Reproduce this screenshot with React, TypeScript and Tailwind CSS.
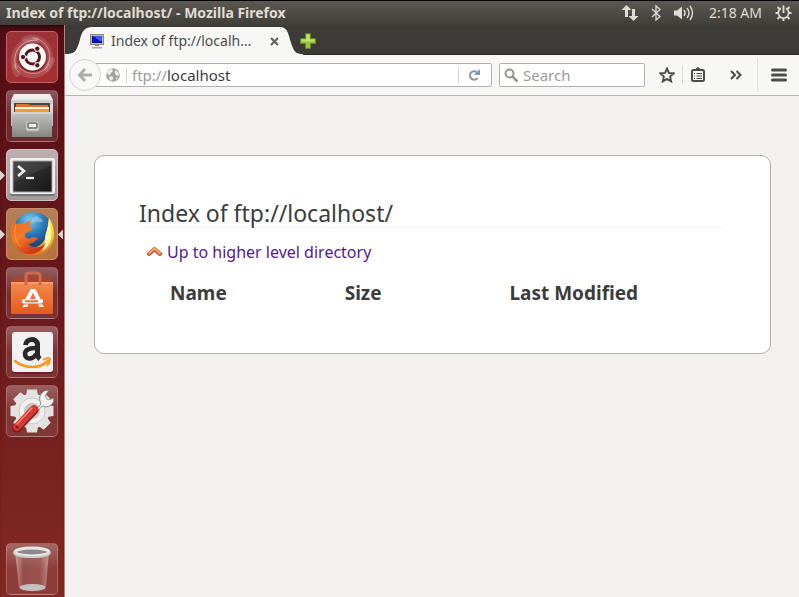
import type { ReactNode } from 'react';

const tileBase =
  'relative flex size-[52px] shrink-0 items-center justify-center rounded-[5px] border';

function Tile({ label, tone, children }: { label: string; tone: string; children: ReactNode }) {
  return (
    <button type="button" aria-label={label} className={`${tileBase} ${tone}`}>
      {children}
    </button>
  );
}

const glass = 'border-white/20 bg-linear-to-b from-white/30 via-white/10 to-white/10';

function RunningMark() {
  return (
    <svg className="absolute top-[20px] -left-[7px]" width="5" height="11" viewBox="0 0 5 11" aria-hidden="true">
      <path d="M0 0.5 5 5.5 0 10.5Z" fill="#ddd5d2" />
    </svg>
  );
}

function FocusMark() {
  return (
    <svg className="absolute top-[20px] -right-[6px]" width="5" height="11" viewBox="0 0 5 11" aria-hidden="true">
      <path d="M5 0.5 0 5.5 5 10.5Z" fill="#ddd5d2" />
    </svg>
  );
}

function DashIcon() {
  return (
    <svg width="50" height="50" viewBox="0 0 50 50" aria-hidden="true">
      <g fill="none" stroke="#fff" strokeLinecap="round">
        <path d="M10 42C2 27 9 8 29 8" strokeWidth="6" opacity=".14" />
        <path d="M9 36C4 20 14 8 30 8" opacity=".5" />
        <path d="M18 7C36 1 50 20 40 37" strokeWidth="6" opacity=".12" />
        <path d="M26 6C42 8 47 25 39 36" opacity=".4" />
        <path d="M45 28C38 46 18 48 9 34" strokeWidth="6" opacity=".14" />
        <path d="M43 32C33 46 18 43 11 34" opacity=".35" />
      </g>
      <circle cx="25.5" cy="26" r="14" fill="#4a0d10" opacity=".5" />
      <circle cx="25.5" cy="25" r="13.5" fill="#fff" />
      <circle cx="25.5" cy="25" r="7" fill="none" stroke="#5c1619" strokeWidth="3" />
      <g stroke="#fff" strokeWidth="1.5">
        <path d="M14 25h6M28.500 19.700l3-5M28.500 30.300l3 5" />
      </g>
      <g fill="#5c1619" stroke="#fff" strokeWidth="1">
        <circle cx="16" cy="25" r="2.700" />
        <circle cx="30.300" cy="16.700" r="2.700" />
        <circle cx="30.300" cy="33.300" r="2.700" />
      </g>
    </svg>
  );
}

function FilesIcon() {
  return (
    <svg width="50" height="50" viewBox="0 0 50 50" aria-hidden="true">
      <defs>
        <linearGradient id="drawer" x2="0" y2="1"><stop stopColor="#c3c3c2" /><stop offset="1" stopColor="#858584" /></linearGradient>
        <linearGradient id="cabinet" x2="0" y2="1"><stop stopColor="#f4f4f3" /><stop offset="1" stopColor="#b6b6b5" /></linearGradient>
      </defs>
      <path d="M7 3h36l3 6v26H4V9Z" fill="url(#cabinet)" />
      <path d="M4 9h42v4H4Z" fill="#cfcfce" />
      <path d="M7 12h36v13H7Z" fill="#464543" />
      <path d="M9 13h12l2 1h18v7H9Z" fill="#dd7127" />
      <path d="M8 16h34v2H8Z" fill="#fff1de" />
      <path d="M8 18h34v4H8Z" fill="#ee9a3c" />
      <path d="M6 21h38l1 2v23H5V23Z" fill="url(#drawer)" />
      <path d="M6 22h38" stroke="#e8e8e7" />
      <rect x="19" y="30" width="13" height="10" rx="2" fill="#d8d8d7" stroke="#aaa" />
      <rect x="21" y="32" width="9" height="5" rx="1" fill="#efefee" stroke="#6c6c6b" strokeWidth="1.500" />
    </svg>
  );
}

function TerminalIcon() {
  return (
    <svg width="50" height="50" viewBox="0 0 50 50" aria-hidden="true">
      <defs>
        <linearGradient id="screen" x2="1" y2="1"><stop stopColor="#3c3c3c" /><stop offset=".5" stopColor="#2b2b2b" /><stop offset="1" stopColor="#151515" /></linearGradient>
      </defs>
      <rect x="3" y="9" width="45" height="37" rx="2" fill="#777" />
      <rect x="3" y="8" width="45" height="36" rx="2" fill="#eeeeed" />
      <rect x="6" y="11" width="39" height="31" fill="url(#screen)" stroke="#aaa" />
      <path d="M7 12h37v3L7 32Z" fill="#fff" opacity=".08" />
      <path d="m11 16 6 5-6 5" fill="none" stroke="#f4f4f4" strokeWidth="2.500" />
      <path d="M19 28h8" stroke="#f4f4f4" strokeWidth="2.200" />
    </svg>
  );
}

function FirefoxIcon() {
  return (
    <svg width="50" height="50" viewBox="0 0 50 50" aria-hidden="true">
      <defs>
        <radialGradient id="globe" cx=".42" cy=".2" r=".8"><stop stopColor="#7cc9ee" /><stop offset=".45" stopColor="#2979b8" /><stop offset="1" stopColor="#122b63" /></radialGradient>
        <linearGradient id="fox" x2=".6" y2="1"><stop stopColor="#e86a24" /><stop offset=".5" stopColor="#f37a27" /><stop offset="1" stopColor="#c9351a" /></linearGradient>
        <linearGradient id="tail" x2="0" y2="1"><stop stopColor="#fff37b" /><stop offset=".5" stopColor="#fbc92d" /><stop offset="1" stopColor="#e96b1c" /></linearGradient>
      </defs>
      <circle cx="26" cy="23" r="20" fill="url(#globe)" />
      <path d="M29 7c4 1 6 3 7 6-4 0-8-1-10 1l-3-2Z" fill="#a7daee" opacity=".5" />
      <path d="M42 9c6 9 7 21 1 29-6 8-18 11-27 6l3-6c9 3 16-2 19-8 3-6 2-12 4-21Z" fill="url(#tail)" />
      <path d="M42 14c5 13 2 23-7 28 4-6 2-12 4-18Z" fill="#fff6a0" />
      <path d="M7 10c0 3 1 4 3 5 3-1 5-1 8 0 2-2 4-4 7-4-2 2-3 4-2 7 2 0 3 1 2 2-2 3-7 3-7 6 0 4 4 4 6 3 3-2 6-1 7 1-3 1-5 5-10 5 5 5 13 4 18-1-4 8-11 12-19 11C11 43 4 34 4 24c0-5 1-9 3-14Z" fill="url(#fox)" />
      <path d="M9 16c-3 8-1 16 5 22" fill="none" stroke="#ffac51" opacity=".65" />
    </svg>
  );
}

function SoftwareIcon() {
  return (
    <svg width="50" height="50" viewBox="0 0 50 50" aria-hidden="true">
      <defs>
        <linearGradient id="bag" x2="0" y2="1"><stop stopColor="#f28a4e" /><stop offset="1" stopColor="#e55a1d" /></linearGradient>
      </defs>
      <path d="M7 9h36l3 6H4Z" fill="#a8452a" />
      <path d="M4 14h42v32H4Z" fill="url(#bag)" />
      <path d="M4 14h42v2H4Z" fill="#ffab7a" opacity=".6" />
      <path d="M19 17V8q0-3 3-3h8q3 0 3 3v9" fill="none" stroke="#cf6b4c" strokeWidth="3" />
      <path d="M18.500 31 23.500 21h5l5 10h-4.500l-3-6.500-3 6.500Z" fill="#fff" />
      <rect x="15" y="31" width="21" height="4.500" rx="2" fill="#fff" />
      <rect x="18" y="32.300" width="13" height="2" fill="#ea6c30" />
      <path d="M15.500 39 17 36.500h4.500L20 39ZM31 36.500h4.500L37 39h-4.500Z" fill="#fff" />
    </svg>
  );
}

function AmazonIcon() {
  return (
    <svg width="50" height="50" viewBox="0 0 50 50" aria-hidden="true">
      <rect x="5" y="6" width="41" height="41" rx="3" fill="#581015" opacity=".5" />
      <rect x="5" y="5" width="41" height="40" rx="3" fill="#f1f1f1" />
      <path d="M18.500 18c1-7 11-7 12-1v11q0 2 2.500 4" fill="none" stroke="#292929" strokeWidth="5" />
      <path d="M29 21c-7 0-11 2-11 6 0 6 8 6 11 0" fill="none" stroke="#292929" strokeWidth="4.500" />
      <path d="M8 34c10 8 25 8 33 0" fill="none" stroke="#f7981c" strokeWidth="2.500" strokeLinecap="round" />
      <path d="M36 33q6-3 7-1 0 3-3 7" fill="none" stroke="#f7981c" strokeWidth="2" />
    </svg>
  );
}

function SettingsIcon() {
  return (
    <svg width="50" height="50" viewBox="0 0 50 50" aria-hidden="true">
      <g transform="translate(25 25)" fill="#e3e3e2">
        <circle r="17.500" />
        <path id="cog" d="M-6-15-5-21.500H5L6-15Z" />
        <use href="#cog" transform="rotate(45)" /><use href="#cog" transform="rotate(90)" />
        <use href="#cog" transform="rotate(135)" /><use href="#cog" transform="rotate(180)" />
        <use href="#cog" transform="rotate(225)" /><use href="#cog" transform="rotate(270)" />
        <use href="#cog" transform="rotate(315)" />
        <circle r="13" fill="#efefee" stroke="#cacac9" />
        <circle r="8" fill="#c9c3c2" />
      </g>
      <path d="m29 24 5-6q-4-8 3-13l5-1-4 6 3 4 6-2q0 8-8 9l-4-1-5 6Z" fill="#f1f1f0" stroke="#777" strokeWidth=".8" />
      <path d="M10 42 27 24" stroke="#791b18" strokeWidth="9" strokeLinecap="round" />
      <path d="M10 41 27 23" stroke="#d63931" strokeWidth="7.500" strokeLinecap="round" />
      <path d="M10 38 25 22" stroke="#ff8474" strokeWidth="1.500" strokeLinecap="round" />
      <circle cx="10" cy="41" r="1.500" fill="#821c17" />
    </svg>
  );
}

function TrashIcon() {
  return (
    <svg width="50" height="50" viewBox="0 0 50 50" aria-hidden="true">
      <defs>
        <linearGradient id="bin"><stop stopColor="#fff" stopOpacity=".45" /><stop offset=".25" stopColor="#fff" stopOpacity=".08" /><stop offset=".75" stopColor="#fff" stopOpacity=".12" /><stop offset="1" stopColor="#fff" stopOpacity=".4" /></linearGradient>
      </defs>
      <path d="M8 8 12 43q13 6 27 0L42 8Z" fill="url(#bin)" />
      <ellipse cx="25.500" cy="43.500" rx="13" ry="3.500" fill="#c4c0bc" />
      <ellipse cx="25" cy="8" rx="17" ry="4" fill="#8f8783" stroke="#e8e8e6" strokeWidth="3" />
      <path d="M7 8q0 5 18 5t18-5" fill="none" stroke="#cbc9c5" strokeWidth="2" />
    </svg>
  );
}

function Launcher() {
  return (
    <nav
      aria-label="Launcher"
      className="flex w-[65px] shrink-0 flex-col gap-[7px] border-r border-[#b9827f] bg-linear-to-b from-[#560d15] via-[#6b1a1d] to-[#842923] pt-[6px] pb-[2px] pl-[6px] shadow-[inset_0_5px_5px_-3px_#240609]"
    >
      <Tile label="Search your computer" tone="border-[#bd6467] bg-linear-to-b from-[#9b3338] to-[#a52f32]"><DashIcon /></Tile>
      <Tile label="Files" tone={glass}><FilesIcon /></Tile>
      <Tile label="Terminal" tone="border-[#cbc0c2] bg-linear-to-b from-[#bcaeb1] to-[#a6999d]"><RunningMark /><TerminalIcon /></Tile>
      <Tile label="Firefox" tone="border-[#c79269] bg-linear-to-b from-[#b47e57] to-[#b9733c]"><RunningMark /><FirefoxIcon /><FocusMark /></Tile>
      <Tile label="Ubuntu Software Center" tone={glass}><SoftwareIcon /></Tile>
      <Tile label="Amazon" tone={glass}><AmazonIcon /></Tile>
      <Tile label="System Settings" tone={glass}><SettingsIcon /></Tile>
      <div className="mt-auto"><Tile label="Trash" tone={glass}><TrashIcon /></Tile></div>
    </nav>
  );
}

function TopPanel() {
  return (
    <header className="flex h-[25px] shrink-0 items-center justify-between border-t border-black bg-linear-to-b from-[#5b5850] to-[#403f3a] pr-[7px] pl-[6px] text-[#dfdbd2]">
      <h1 className="text-[14px] leading-5 font-bold">Index of ftp://localhost/ - Mozilla Firefox</h1>
      <div className="flex items-center">
        <button type="button" aria-label="Network">
          <svg width="18" height="18" viewBox="0 0 18 18" fill="currentColor" aria-hidden="true">
            <path d="M5.500 1 .5 6H4v7h3V6h3.500ZM11 5v7H7.500l5 5 5-5H14V5Z" />
          </svg>
        </button>
        <button type="button" aria-label="Bluetooth" className="ml-[12px]">
          <svg width="10" height="18" viewBox="0 0 10 18" fill="none" stroke="currentColor" strokeWidth="1.300" aria-hidden="true">
            <path d="m1 5 8 7.500L5 16V2l4 3.500L1 13" />
          </svg>
        </button>
        <button type="button" aria-label="Sound" className="ml-[12px]">
          <svg width="22" height="18" viewBox="0 0 22 18" fill="none" stroke="currentColor" aria-hidden="true">
            <path d="M1 6.500h3l5-4v13l-5-4H1Z" fill="currentColor" stroke="none" />
            <path d="M11 6q2 3 0 6M14 4q4 5 0 10M17 2q5 7 0 14" strokeWidth="1.400" />
          </svg>
        </button>
        <time className="ml-[14px] text-[14px] leading-5">2:18 AM</time>
        <button type="button" aria-label="Session" className="ml-[13px]">
          <svg width="17" height="18" viewBox="0 0 17 18" fill="none" stroke="currentColor" aria-hidden="true">
            <path d="M6 4.300a5.200 5.200 0 1 0 5 0" strokeWidth="1.700" />
            <path d="M8.500 1.500v7.500" strokeWidth="1.800" />
            <path d="m2.500 3 2 2M14.500 3l-2 2M.5 9H3M14 9h2.500M2.500 15l2-2M14.500 15l-2-2M8.500 14.500V17" strokeWidth="1.800" />
          </svg>
        </button>
      </div>
    </header>
  );
}

function TabStrip() {
  return (
    <div className="flex h-[30px] shrink-0 items-end bg-[#3c3b37] shadow-[inset_0_-1px_0_#2c2b28]">
      <svg width="30" height="28" viewBox="0 0 30 28" className="shrink-0" aria-hidden="true">
        <path d="M0 28V27C9 27 11 25 14 16C17 5 18 0 28 0H30V28Z" fill="#f7f7f6" />
      </svg>
      <div className="flex h-[28px] w-[186px] shrink-0 items-center bg-[#f7f7f6] pr-[2px] text-[#4c4c4c]">
        <svg width="14" height="16" viewBox="0 0 14 16" className="ml-[-5px] shrink-0" aria-hidden="true">
          <rect x=".5" y="1.500" width="13" height="10" fill="#b7b5ae" stroke="#8f8d87" />
          <path d="M2 3h10v7H2Z" fill="#0711b8" />
          <path d="m3 3 7 5h2V3Z" fill="#3b5ee5" />
          <path d="M5 12h4v1H5Z" fill="#77756f" />
          <path d="M2 14h10v1.500H2Z" fill="#aaa7a0" />
        </svg>
        <button type="button" title="Index of ftp://localhost/" className="ml-[7px] flex-1 text-left text-[14px] leading-5 whitespace-nowrap">Index of ftp://localh…</button>
        <button type="button" aria-label="Close tab" className="shrink-0">
          <svg width="9" height="9" viewBox="0 0 9 9" aria-hidden="true">
            <path d="m1 1 7 7M8 1 1 8" stroke="#62625f" strokeWidth="2.200" />
          </svg>
        </button>
      </div>
      <svg width="22" height="28" viewBox="0 0 22 28" className="shrink-0" aria-hidden="true">
        <path d="M22 28V27C15 27 13 25 10 16C7 5 6 1 0 0V28Z" fill="#f7f7f6" />
      </svg>
      <button type="button" aria-label="Open a new tab" className="mb-[6px] ml-[-3px]">
        <svg width="16" height="16" viewBox="0 0 16 16" aria-hidden="true">
          <path d="M5.500.5h5v5h5v5h-5v5h-5v-5h-5v-5h5Z" fill="#9cc336" stroke="#648523" />
          <path d="M6.500 6.500v-5h3v5h5v2H1.500v-2Z" fill="#c4df72" />
        </svg>
      </button>
    </div>
  );
}

function NavBar() {
  return (
    <div className="flex h-[41px] shrink-0 items-center border-b border-[#b5b4b0] bg-[#f7f7f6] pl-[4px] text-[#4c4c4c]">
      <button type="button" aria-label="Back" className="z-10 flex size-[32px] shrink-0 items-center justify-center rounded-full border border-[#d5d4d1] bg-[#f8f8f7]">
        <svg width="16" height="16" viewBox="0 0 16 16" fill="none" stroke="#acacaa" strokeWidth="3" aria-hidden="true">
          <path d="M8 2 2.500 8 8 14M3 8h12" />
        </svg>
      </button>
      <div className="ml-[-6px] flex h-[24px] min-w-0 flex-1 items-center rounded-r-[2px] border border-[#b1b0ab] bg-white pl-[10px]">
        <svg width="14" height="14" viewBox="0 0 14 14" className="shrink-0" aria-hidden="true">
          <circle cx="7" cy="7" r="6.800" fill="#a0a09e" />
          <path d="M1 4q2-3 5-3L7 3 5 5 4 7 2 7ZM9 2l3 2 1 3-2 1-2-2ZM4 8l3 1v2l-2 2-2-3ZM10 10l2-1-2 3Z" fill="#f0f0ef" />
        </svg>
        <div className="ml-[6px] h-[16px] border-l border-[#d4d3d0]" />
        <div className="relative ml-[5px] min-w-0 flex-1 text-[15px] leading-5">
          <div aria-hidden="true" className="pointer-events-none absolute inset-0 text-[#3c3c3c]"><span className="text-[#9b9b99]">ftp://</span>localhost</div>
          <input aria-label="Address" defaultValue="ftp://localhost" className="block h-5 w-full bg-transparent text-transparent outline-none" />
        </div>
        <div className="h-[16px] border-l border-[#d4d3d0]" />
        <button type="button" aria-label="Reload" className="mr-[10px] ml-[9px]">
          <svg width="13" height="14" viewBox="0 0 13 14" aria-hidden="true">
            <path d="M9 4.500A4.200 4.200 0 1 0 9.500 10" fill="none" stroke="#8495a5" strokeWidth="2" />
            <path d="M12 1v6H6Z" fill="#8495a5" />
          </svg>
        </button>
      </div>
      <label className="ml-[7px] flex h-[24px] w-[146px] shrink-0 items-center rounded-[2px] border border-[#b1b0ab] bg-white pl-[4px]">
        <svg width="15" height="15" viewBox="0 0 15 15" fill="none" stroke="#969694" className="shrink-0" aria-hidden="true">
          <circle cx="5.500" cy="5.500" r="4" strokeWidth="2" /><path d="m8.500 8.500 5 5" strokeWidth="2.500" />
        </svg>
        <input aria-label="Search" placeholder="Search" className="ml-[4px] h-5 w-full min-w-0 bg-transparent text-[15px] leading-5 outline-none placeholder:text-[#9b9b99]" />
      </label>
      <button type="button" aria-label="Bookmark this page" className="ml-[14px]">
        <svg width="16" height="16" viewBox="0 0 16 16" aria-hidden="true">
          <path d="m8 1.500 1.900 4.400 4.800.5-3.600 3.200 1.100 4.800L8 11.900l-4.200 2.500 1.100-4.800-3.600-3.200 4.800-.5Z" fill="none" stroke="#4c4c4c" strokeWidth="1.900" />
        </svg>
      </button>
      <div className="ml-[7px] h-[18px] border-l border-[#dcdbd9]" />
      <button type="button" aria-label="Show your bookmarks" className="ml-[8px]">
        <svg width="14" height="16" viewBox="0 0 14 16" fill="none" stroke="#4c4c4c" aria-hidden="true">
          <rect x="1" y="3" width="12" height="11" rx="1.500" strokeWidth="2" />
          <path d="m4 3 3-2.500L10 3Z" fill="#4c4c4c" />
          <path d="M3 6.500h1M5.500 6.500H11M3 9h1M5.500 9H11M3 11.500h1M5.500 11.500H11" strokeWidth="1.200" />
        </svg>
      </button>
      <button type="button" aria-label="More tools" className="ml-[25px]">
        <svg width="12" height="10" viewBox="0 0 12 10" fill="none" stroke="#4c4c4c" strokeWidth="2" aria-hidden="true">
          <path d="m1 1 4 4-4 4M6.500 1l4 4-4 4" />
        </svg>
      </button>
      <div className="ml-[15px] h-[34px] border-l border-[#e2e1df]" />
      <button type="button" aria-label="Open menu" className="mr-[12px] ml-[13px]">
        <svg width="16" height="14" viewBox="0 0 16 14" stroke="#4c4c4c" strokeWidth="3" strokeLinecap="round" aria-hidden="true">
          <path d="M1.500 2h13M1.500 7h13M1.500 12h13" />
        </svg>
      </button>
    </div>
  );
}

function Listing() {
  return (
    <main className="flex-1 bg-[#f2f1ef] pt-[59px] pr-[28px] pl-[29px]">
      <section className="rounded-[10px] border border-[#b1b0ab] bg-white px-[44px] pt-[43px] pb-[46px] text-[#3c3c3c]">
        <h2 className="border-b border-[#f6f5f4] text-[23px] leading-7">Index of ftp://localhost/</h2>
        <p className="mt-[11px] ml-[8px] leading-6">
          <a href="ftp://localhost/" className="inline-flex items-center gap-[5px] text-[16px] text-[#551a8b]">
            <svg width="15" height="11" viewBox="0 0 15 11" fill="none" strokeLinecap="round" strokeLinejoin="round" aria-hidden="true">
              <path d="m2 8 5.500-5L13 8" stroke="#c65328" strokeWidth="4" />
              <path d="m2 7.500 5.500-5 5.500 5" stroke="#f5aa75" strokeWidth="1.700" />
            </svg>
            Up to higher level directory
          </a>
        </p>
        <table className="mt-[15px] w-[92%] table-fixed text-[19px] leading-7">
          <thead>
            <tr>
              <th scope="col" className="w-[22%] text-center font-bold">Name</th>
              <th scope="col" className="w-[39%] text-center font-bold">Size</th>
              <th scope="col" className="w-[39%] text-center font-bold">Last Modified</th>
            </tr>
          </thead>
        </table>
      </section>
    </main>
  );
}

export default function App() {
  return (
    <div className="flex min-h-screen flex-col font-['Noto_Sans',sans-serif]">
      <TopPanel />
      <div className="flex flex-1">
        <Launcher />
        <div className="flex min-w-0 flex-1 flex-col">
          <TabStrip />
          <NavBar />
          <Listing />
        </div>
      </div>
    </div>
  );
}
